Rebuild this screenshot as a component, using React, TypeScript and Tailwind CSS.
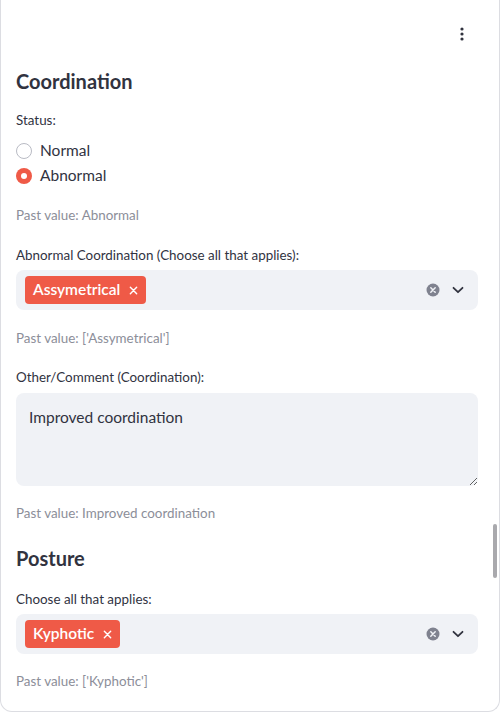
import { useState } from "react";

const font = { fontFamily: "Lato, 'Noto Sans', sans-serif" };

function Kebab() {
  return (
    <svg width="4" height="14" viewBox="0 0 4 14" className="text-[#31333f]">
      <circle cx="2" cy="2" r="1.6" fill="currentColor" />
      <circle cx="2" cy="7" r="1.6" fill="currentColor" />
      <circle cx="2" cy="12" r="1.6" fill="currentColor" />
    </svg>
  );
}

function Radio({ label, checked }: { label: string; checked?: boolean }) {
  return (
    <div className="flex h-[24px] items-center gap-[8px]">
      {checked ? (
        <span className="flex h-[16px] w-[16px] items-center justify-center rounded-full bg-[#ef5a47]">
          <span className="h-[6px] w-[6px] rounded-full bg-white" />
        </span>
      ) : (
        <span className="h-[16px] w-[16px] rounded-full border border-[#b9bbc4] bg-white" />
      )}
      <span className="text-[15.5px] text-[#31333f]">{label}</span>
    </div>
  );
}

function Tag({ label }: { label: string }) {
  return (
    <span className="flex h-[28px] items-center gap-[9px] rounded-[4px] bg-[#ef5a47] pl-[8px] pr-[8px] text-[15.5px] font-semibold text-white">
      {label}
      <svg width="9" height="9" viewBox="0 0 10 10">
        <path d="M1.5 1.5l7 7M8.5 1.5l-7 7" stroke="white" strokeWidth="1.6" strokeLinecap="round" />
      </svg>
    </span>
  );
}

function MultiSelect({ value }: { value: string }) {
  return (
    <div className="flex h-[40px] items-center rounded-[8px] bg-[#f0f2f6] pl-[9px] pr-[14px]">
      <Tag label={value} />
      <div className="ml-auto flex items-center gap-[12px]">
        <svg width="14" height="14" viewBox="0 0 14 14">
          <circle cx="7" cy="7" r="6.5" fill="#7f828f" />
          <path d="M4.8 4.8l4.4 4.4M9.2 4.8l-4.4 4.4" stroke="#f0f2f6" strokeWidth="1.5" strokeLinecap="round" />
        </svg>
        <svg width="12" height="8" viewBox="0 0 12 8">
          <path d="M1.5 1.8L6 6.2l4.5-4.4" fill="none" stroke="#31333f" strokeWidth="1.8" strokeLinecap="round" strokeLinejoin="round" />
        </svg>
      </div>
    </div>
  );
}

function Past({ text, className }: { text: string; className: string }) {
  return <p className={`h-[20px] text-[13.4px] leading-[20px] text-[#8c8e99] ${className}`}>{text}</p>;
}

function Label({ text, className }: { text: string; className: string }) {
  return <p className={`h-[20px] text-[13.4px] leading-[20px] text-[#31333f] ${className}`}>{text}</p>;
}

export default function App() {
  const [comment, setComment] = useState("Improved coordination");

  return (
    <div
      style={font}
      className="relative h-[712px] w-[500px] overflow-hidden rounded-b-[12px] border-x border-b border-[#dcdde2] bg-white"
    >
      <div className="flex flex-col pl-[15px] pr-[21px] pt-[27px]">
        <div className="flex h-[14px] justify-end pr-[14px]">
          <Kebab />
        </div>

        <h2 className="mt-[26px] h-[28px] text-[20px] font-bold leading-[28px] text-[#31333f]">Coordination</h2>
        <Label text="Status:" className="mt-[15px]" />
        <div className="mt-[9px] flex flex-col gap-[1px]">
          <Radio label="Normal" />
          <Radio label="Abnormal" checked />
        </div>
        <Past text="Past value: Abnormal" className="mt-[17px]" />

        <Label text="Abnormal Coordination (Choose all that applies):" className="mt-[20px]" />
        <div className="mt-[5px]">
          <MultiSelect value="Assymetrical" />
        </div>
        <Past text="Past value: ['Assymetrical']" className="mt-[18px]" />

        <Label text="Other/Comment (Coordination):" className="mt-[19px]" />
        <textarea
          value={comment}
          onChange={(e) => setComment(e.target.value)}
          className="mt-[6px] h-[93px] w-full rounded-[8px] bg-[#f0f2f6] px-[13px] py-[12px] text-[15.5px] leading-[24px] text-[#31333f] outline-none"
        />
        <Past text="Past value: Improved coordination" className="mt-[17px]" />

        <h2 className="mt-[21px] h-[28px] text-[20px] font-bold leading-[28px] text-[#31333f]">Posture</h2>
        <Label text="Choose all that applies:" className="mt-[17px]" />
        <div className="mt-[5px]">
          <MultiSelect value="Kyphotic" />
        </div>
        <Past text="Past value: ['Kyphotic']" className="mt-[17px]" />
      </div>

      <div className="absolute right-[2px] top-[524px] h-[54px] w-[4px] rounded-full bg-[#a9a9ad]" />
    </div>
  );
}
